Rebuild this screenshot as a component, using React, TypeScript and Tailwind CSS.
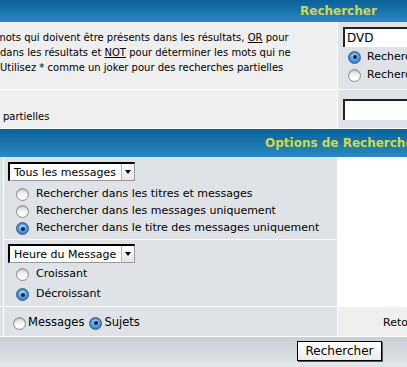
import React from "react";

function Radio({ checked = false }: { checked?: boolean }) {
  return checked ? (
    <span className="inline-flex h-[13px] w-[13px] shrink-0 items-center justify-center rounded-full border border-[#2f5f95] bg-[radial-gradient(circle_at_50%_35%,#b9dcfb_0%,#5aa3e6_45%,#1f63b3_100%)] shadow-[inset_0_1px_1px_rgba(0,0,0,0.3)]">
      <span className="h-[4px] w-[4px] rounded-full bg-[#0b2240]" />
    </span>
  ) : (
    <span className="inline-block h-[13px] w-[13px] shrink-0 rounded-full border border-[#8d8d8d] bg-[linear-gradient(#d8d8d8,#ffffff_70%)] shadow-[inset_0_1px_1px_rgba(0,0,0,0.2)]" />
  );
}

function Select({ label }: { label: string }) {
  return (
    <div className="flex h-[19px] w-[127px] border-t-2 border-l-2 border-black border-r border-b border-r-[#9a9a9a] border-b-[#9a9a9a] bg-white">
      <span className="flex-1 pl-[4px] text-[11px] leading-[17px] whitespace-nowrap">{label}</span>
      <span className="flex w-[13px] items-center justify-center border-l border-[#b5b5b5] bg-[linear-gradient(#ffffff,#e6e6e6)]">
        <span className="h-0 w-0 border-x-[3px] border-t-[4px] border-x-transparent border-t-black" />
      </span>
    </div>
  );
}

function Option({ checked, label }: { checked?: boolean; label: string }) {
  return (
    <div className="flex h-[17px] items-center gap-[7px]">
      <Radio checked={checked} />
      <span>{label}</span>
    </div>
  );
}

export default function App() {
  return (
    <div className="h-[367px] w-[407px] overflow-hidden bg-white text-[11px] text-black [font-family:'DejaVu_Sans',Verdana,sans-serif]">
      {/* Rechercher */}
      <div className="h-[22px] bg-[linear-gradient(#0b6198,#2a89bf)] pl-[300px] text-[12px] font-bold leading-[22px] text-[#cfd94a]">
        Rechercher
      </div>

      <div className="flex h-[67px]">
        <div className="w-[337px] shrink-0 overflow-hidden bg-[#efefef] pt-[8px] text-[10px] leading-[15px] whitespace-nowrap">
          <div className="-ml-[4px]">mots qui doivent être présents dans les résultats, <u>OR</u> pour</div>
          <div>dans les résultats et <u>NOT</u> pour déterminer les mots qui ne</div>
          <div>Utilisez * comme un joker pour des recherches partielles</div>
        </div>
        <div className="flex-1 border-l border-white bg-[#dfe3e7] pl-[5px] pt-[5px] whitespace-nowrap">
          <div className="flex h-[20px] items-center border-t-2 border-l-2 border-[#222] bg-white pl-[2px] text-[12px]">DVD</div>
          <div className="mt-[1px] flex h-[18px] items-center gap-[6px] pl-[5px] text-[11px]">
            <Radio checked />
            <span>Rechercher</span>
          </div>
          <div className="flex h-[18px] items-center gap-[6px] pl-[5px] text-[11px]">
            <Radio />
            <span>Rechercher</span>
          </div>
        </div>
      </div>

      <div className="flex h-[39px] border-t border-white">
        <div className="flex w-[337px] shrink-0 items-end bg-[#efefef] pb-[4px] pl-[3px] text-[10px]">partielles</div>
        <div className="flex-1 border-l border-white bg-[#dfe3e7] pl-[5px] pt-[9px]">
          <div className="h-[21px] border-t-2 border-l-2 border-[#222] bg-white" />
        </div>
      </div>

      {/* Options de Recherche */}
      <div className="h-[29px] border-t border-white bg-[linear-gradient(#0b6198,#2a89bf)] pl-[265px] text-[12px] font-bold leading-[28px] whitespace-nowrap text-[#cfd94a]">
        Options de Recherche
      </div>

      <div className="flex h-[149px]">
        <div className="flex w-[337px] shrink-0 bg-[#dfe3e7]">
          <div className="w-[3px]" />
          <div className="flex flex-1 flex-col border-l border-white">
            <div className="h-[82px] pl-[4px] pt-[5px] whitespace-nowrap">
              <Select label="Tous les messages" />
              <div className="mt-[5px] pl-[8px]">
                <Option label="Rechercher dans les titres et messages" />
                <Option label="Rechercher dans les messages uniquement" />
                <Option checked label="Rechercher dans le titre des messages uniquement" />
              </div>
            </div>
            <div className="flex-1 border-t border-white pl-[4px] pt-[4px] whitespace-nowrap">
              <Select label="Heure du Message" />
              <div className="mt-[3px] flex flex-col gap-[3px] pl-[8px]">
                <Option label="Croissant" />
                <Option checked label="Décroissant" />
              </div>
            </div>
          </div>
        </div>
        <div className="flex-1 border-l border-white bg-white" />
      </div>

      <div className="flex h-[31px] border-y border-white">
        <div className="flex w-[337px] shrink-0 bg-[#dfe3e7]">
          <div className="w-[3px]" />
          <div className="flex flex-1 items-center border-l border-white pl-[9px] pt-[3px] text-[11.5px]">
            <Radio />
            <span className="ml-[2px]">Messages</span>
            <span className="ml-[5px] flex"><Radio checked /></span>
            <span className="ml-[2px]">Sujets</span>
          </div>
        </div>
        <div className="flex flex-1 items-center border-l border-white bg-[#efefef] pl-[45px] pt-[3px] text-[11px] whitespace-nowrap">
          Retour
        </div>
      </div>

      <div className="flex h-[25px] items-start justify-end bg-[linear-gradient(#c9cfd5,#dde1e5)] pr-[25px] pt-[4px]">
        <button className="h-[20px] w-[85px] border border-black bg-[linear-gradient(#ffffff,#ececec)] text-[12px] leading-[17px] shadow-[1px_1px_0_#555] [font-family:'DejaVu_Sans',sans-serif]">
          Rechercher
        </button>
      </div>
      <div className="h-[6px] bg-[#e3e6e9]" />
    </div>
  );
}
